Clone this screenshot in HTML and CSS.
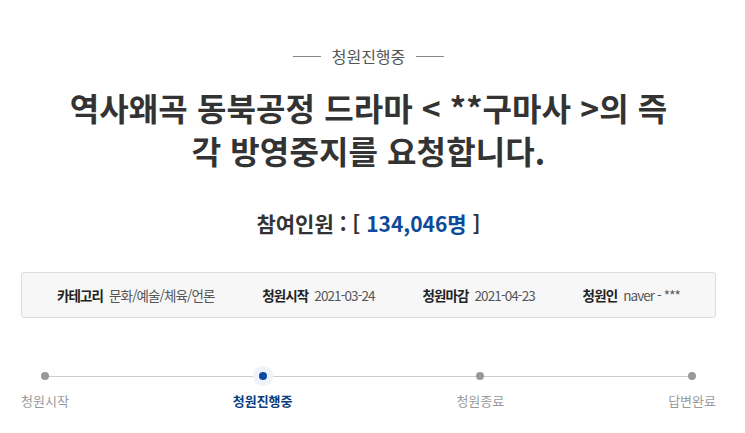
FILE: index.html
```html
<!DOCTYPE html>
<html lang="ko">
<head>
  <meta charset="UTF-8" />
  <meta name="viewport" content="width=device-width, initial-scale=1.0" />
  <title>청원진행중</title>
  <link rel="stylesheet" href="styles.css">
</head>
<body>
  <div class="petition">
    <div class="status"><span>청원진행중</span></div>
    <h1 class="title">역사왜곡 동북공정 드라마 &lt; **구마사 &gt;의 즉<br>각 방영중지를 요청합니다.</h1>
    <div class="count">참여인원 : [ <span class="num">134,046명</span> ]</div>

    <ul class="info">
      <li><strong>카테고리</strong>문화/예술/체육/언론</li>
      <li><strong>청원시작</strong>2021-03-24</li>
      <li><strong>청원마감</strong>2021-04-23</li>
      <li><strong>청원인</strong>naver - ***</li>
    </ul>

    <ol class="steps">
      <li>청원시작</li>
      <li class="on">청원진행중</li>
      <li>청원종료</li>
      <li>답변완료</li>
    </ol>
  </div>
</body>
</html>
```

FILE: styles.css
```css
body {
  margin: 0;
  background: #fff;
  font-family: "Noto Sans CJK KR", "Noto Sans", sans-serif;
  color: #333;
}
.petition {
  width: 695px;
  padding: 46px 0 0 21px;
}
.status {
  display: flex;
  justify-content: center;
  align-items: center;
  gap: 11px;
  font-size: 16px;
  line-height: 20px;
  color: #555;
}
.status::before,
.status::after {
  content: "";
  width: 28px;
  height: 1px;
  background: #888;
}
.title {
  margin: 20px 0 0;
  text-align: center;
  font-size: 32px;
  line-height: 43px;
  font-weight: bold;
  color: #333;
  letter-spacing: 0.1px;
}
.count {
  margin-top: 37px;
  text-align: center;
  font-size: 21px;
  line-height: 28px;
  font-weight: bold;
  color: #333;
}
.count .num {
  color: #0d4a9c;
}
.info {
  list-style: none;
  margin: 35px 0 0;
  padding: 0 35px;
  height: 44px;
  display: flex;
  justify-content: space-between;
  align-items: center;
  background: #f7f7f7;
  border: 1px solid #dcdcdc;
  border-radius: 3px;
  font-size: 13.5px;
  letter-spacing: -0.9px;
  color: #555;
}
.info strong {
  color: #222;
  margin-right: 6px;
}
.steps {
  position: relative;
  list-style: none;
  margin: 47px 0 0;
  padding: 0;
  display: flex;
  justify-content: space-between;
  font-size: 13px;
  color: #999;
}
.steps::before {
  content: "";
  position: absolute;
  left: 22px;
  right: 22px;
  top: 11px;
  height: 1px;
  background: #ccc;
}
.steps li {
  position: relative;
  padding-top: 26px;
  line-height: 20px;
  display: flex;
  flex-direction: column;
  align-items: center;
}
.steps li::before {
  content: "";
  position: absolute;
  top: 7px;
  left: 50%;
  margin-left: -4px;
  width: 8px;
  height: 8px;
  border-radius: 50%;
  background: #999;
}
.steps li.on {
  color: #0b3d80;
  font-weight: bold;
}
.steps li.on::before {
  background: #0b4aa2;
  box-shadow: 0 0 0 6px #eef3fb;
}
```
